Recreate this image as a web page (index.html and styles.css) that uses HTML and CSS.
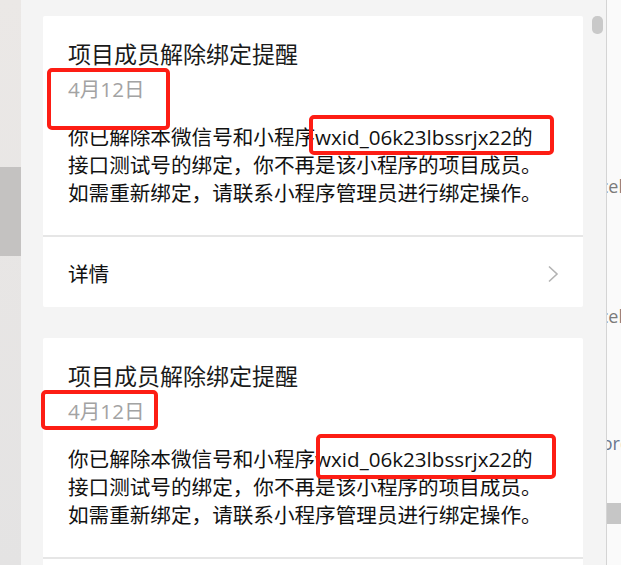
FILE: index.html
```html
<!DOCTYPE html>
<html>
<head>
	<meta charset="utf-8">
	<title>项目成员解除绑定提醒</title>
	<link rel="stylesheet" href="styles.css">
</head>
<body>
	<div class="page">
		<div class="side-left">
			<div class="side-band"></div>
		</div>

		<div class="feed">
			<div class="feed-list">
				<div class="card">
					<div class="card-body">
						<div class="card-title">项目成员解除绑定提醒</div>
						<div class="card-date">4月12日</div>
						<div class="card-text">你已解除本微信号和小程序wxid_06k23lbssrjx22的<br>接口测试号的绑定，你不再是该小程序的项目成员。<br>如需重新绑定，请联系小程序管理员进行绑定操作。</div>
					</div>
					<div class="card-foot">
						<span>详情</span>
						<svg class="chevron" width="12" height="18" viewBox="0 0 12 18"><path d="M2 1.5 L10 9 L2 16.5" fill="none" stroke="#b3b3b3" stroke-width="1.6"/></svg>
					</div>
					<div class="mark mark-date-a"></div>
					<div class="mark mark-id-a"></div>
				</div>

				<div class="card">
					<div class="card-body">
						<div class="card-title">项目成员解除绑定提醒</div>
						<div class="card-date">4月12日</div>
						<div class="card-text">你已解除本微信号和小程序wxid_06k23lbssrjx22的<br>接口测试号的绑定，你不再是该小程序的项目成员。<br>如需重新绑定，请联系小程序管理员进行绑定操作。</div>
					</div>
					<div class="card-foot">
						<span>详情</span>
						<svg class="chevron" width="12" height="18" viewBox="0 0 12 18"><path d="M2 1.5 L10 9 L2 16.5" fill="none" stroke="#b3b3b3" stroke-width="1.6"/></svg>
					</div>
					<div class="mark mark-date-b"></div>
					<div class="mark mark-id-b"></div>
				</div>
			</div>
			<div class="scroll-track">
				<div class="scroll-thumb"></div>
			</div>
		</div>

		<div class="side-right">
			<div class="peek peek-1"><span>Excel</span></div>
			<div class="peek peek-2"><span>Excel</span></div>
			<div class="peek peek-3 blue"><span>Word</span></div>
			<div class="peek-block"></div>
		</div>
	</div>
</body>
</html>
```

FILE: styles.css
```css
*{
	margin: 0;
	padding: 0;
	box-sizing: border-box;
}

html, body{
	height: 565px;
	overflow: hidden;
}

body{
	font-family: "Open Sans", "Noto Sans CJK SC", sans-serif;
	background-color: #f4f4f4;
}

.page{
	display: flex;
	height: 565px;
}

/* left window edge */
.side-left{
	width: 21px;
	flex-shrink: 0;
	background: linear-gradient(#ebe8e6, #e4e3e3);
	padding-top: 167px;
}

.side-band{
	height: 89px;
	background-color: #c4c2c1;
}

/* message list */
.feed{
	width: 586px;
	flex-shrink: 0;
	display: flex;
	background-color: #f4f4f4;
	border-right: 1px solid #d4d4d4;
}

.feed-list{
	width: 540px;
	margin-left: 22px;
	padding-top: 16px;
	display: flex;
	flex-direction: column;
	gap: 31px;
}

.card{
	position: relative;
	background-color: #fff;
	border-radius: 2px;
}

.card-body{
	padding: 21px 25px 28px;
	border-bottom: 2px solid #e6e6e6;
}

.card-title{
	font-size: 23px;
	line-height: 34px;
	color: #1a1a1a;
}

.card-date{
	font-size: 20.6px;
	line-height: 28px;
	color: #a3a3a3;
	margin-top: 4px;
}

.card-text{
	margin-top: 20px;
	font-size: 20.6px;
	line-height: 28px;
	color: #111;
	white-space: nowrap;
}

.card-foot{
	height: 70px;
	padding: 2px 24px 0 25px;
	display: flex;
	align-items: center;
	justify-content: space-between;
	font-size: 20.6px;
	color: #111;
}

.chevron{
	margin-top: 1px;
}

/* red annotation frames */
.mark{
	position: absolute;
	border: 4px solid #fd1d14;
	border-radius: 5px;
}

.mark-date-a{
	left: 4px;
	top: 52px;
	width: 123px;
	height: 62px;
}

.mark-id-a{
	left: 266px;
	top: 99px;
	width: 245px;
	height: 40px;
}

.mark-date-b{
	left: -2px;
	top: 52px;
	width: 117px;
	height: 40px;
}

.mark-id-b{
	left: 273px;
	top: 96px;
	width: 240px;
	height: 45px;
}

/* scrollbar */
.scroll-track{
	width: 11px;
	margin-left: 9px;
	padding-top: 16px;
}

.scroll-thumb{
	height: 18px;
	border-radius: 5px;
	background-color: #c9c9c9;
}

/* right window edge */
.side-right{
	flex: 1;
	background-color: #fafafa;
	overflow: hidden;
	display: flex;
	flex-direction: column;
}

.peek{
	display: flex;
	justify-content: flex-end;
	white-space: nowrap;
	font-family: "Open Sans", sans-serif;
	font-size: 18px;
	line-height: 24px;
	color: #7a7a7a;
}

.peek.blue{
	color: #6a7890;
}

.peek-1{
	margin-top: 174px;
	margin-right: -2px;
}

.peek-2{
	margin-top: 106px;
	margin-right: -2px;
}

.peek-3{
	margin-top: 103px;
	margin-right: -10px;
}

.peek-block{
	margin-top: 48px;
	height: 21px;
	background-color: #c6c6c6;
}
```
